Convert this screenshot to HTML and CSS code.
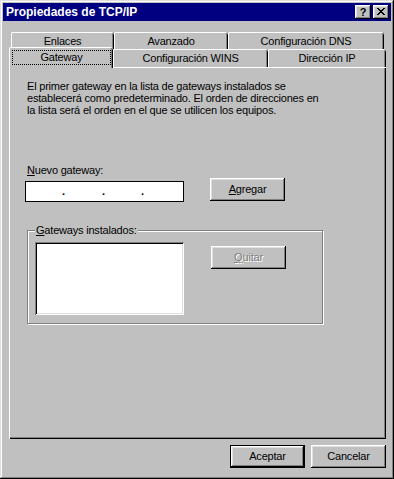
FILE: index.html
```html
<!DOCTYPE html>
<html lang="es">
<head>
    <meta charset="UTF-8">
    <meta name="viewport" content="width=device-width, initial-scale=1.0">
    <title>Propiedades de TCP/IP</title>
    <link rel="stylesheet" href="styles.css">
</head>
<body>
    <div class="window">
        <div class="titlebar">
            <span class="title">Propiedades de TCP/IP</span>
            <button class="cap-btn help">?</button>
            <button class="cap-btn close">
                <svg width="8" height="7" viewBox="0 0 8 7" shape-rendering="crispEdges">
                    <path d="M0 0h2v1h-2z M6 0h2v1h-2z M1 1h2v1h-2z M5 1h2v1h-2z M2 2h4v1h-4z M3 3h2v1h-2z M2 4h4v1h-4z M1 5h2v1h-2z M5 5h2v1h-2z M0 6h2v1h-2z M6 6h2v1h-2z" fill="#000"/>
                </svg>
            </button>
        </div>

        <div class="dialog-body">
            <div class="tab-row back">
                <div class="tab tab-enlaces">Enlaces</div>
                <div class="tab tab-avanzado">Avanzado</div>
                <div class="tab tab-dns">Configuración DNS</div>
            </div>
            <div class="tab-row front">
                <div class="tab tab-gateway active"><span class="focus">Gateway</span></div>
                <div class="tab tab-wins">Configuración WINS</div>
                <div class="tab tab-ip">Dirección IP</div>
            </div>

            <div class="panel">
                <p class="intro">
                    El primer gateway en la lista de gateways instalados se<br>
                    establecerá como predeterminado. El orden de direcciones en<br>
                    la lista será el orden en el que se utilicen los equipos.
                </p>

                <div class="field-label"><u>N</u>uevo gateway:</div>
                <div class="add-row">
                    <div class="ip-input">
                        <span class="ip-part"></span><span class="ip-dot">.</span>
                        <span class="ip-part p2"></span><span class="ip-dot">.</span>
                        <span class="ip-part"></span><span class="ip-dot">.</span>
                    </div>
                    <button class="btn btn-add"><u>A</u>gregar</button>
                </div>

                <fieldset class="group">
                    <legend><u>G</u>ateways instalados:</legend>
                    <div class="group-inner">
                        <div class="listbox"></div>
                        <button class="btn btn-remove" disabled><u>Q</u>uitar</button>
                    </div>
                </fieldset>
            </div>

            <div class="actions">
                <button class="btn default">Aceptar</button>
                <button class="btn">Cancelar</button>
            </div>
        </div>
    </div>
</body>
</html>
```

FILE: styles.css
```css
body {
    margin: 0;
    background: #c0c0c0;
    font-family: "Liberation Sans", Arial, sans-serif;
    font-size: 11px;
    letter-spacing: -0.2px;
    color: #000;
}
.window {
    width: 394px;
    height: 479px;
    box-sizing: border-box;
    padding: 3px;
    background: #c0c0c0;
    box-shadow: inset -1px -1px #000, inset 1px 1px #dfdfdf, inset -2px -2px #808080, inset 2px 2px #fff;
    display: flex;
    flex-direction: column;
}
.titlebar {
    height: 18px;
    background: #000080;
    display: flex;
    align-items: center;
    padding: 0 2px 0 3px;
}
.title {
    color: #fff;
    font-weight: bold;
    font-size: 12px;
    line-height: 18px;
    letter-spacing: 0;
    flex: 1;
}
.cap-btn {
    width: 16px;
    height: 14px;
    padding: 0;
    border: 0;
    background: #c0c0c0;
    box-shadow: inset -1px -1px #000, inset 1px 1px #fff, inset -2px -2px #808080, inset 2px 2px #dfdfdf;
    display: flex;
    align-items: center;
    justify-content: center;
    font-family: "Liberation Sans", Arial, sans-serif;
    font-weight: bold;
    font-size: 11px;
    line-height: 14px;
}
.close {
    margin-left: 2px;
    padding: 0 1px 1px 0;
}
.help {
    padding-bottom: 1px;
}
.dialog-body {
    padding: 11px 5px 0 6px;
    display: flex;
    flex-direction: column;
}

/* tabs */
.tab-row {
    display: flex;
}
.tab-row.back {
    height: 17px;
    padding-left: 2px;
}
.tab-row.front {
    height: 18px;
    align-items: flex-end;
}
.tab {
    box-sizing: border-box;
    background: #c0c0c0;
    border-radius: 2px 2px 0 0;
    box-shadow: inset 1px 0 #fff, inset 0 1px #fff, inset -1px 0 #000, inset -2px 0 #808080;
    text-align: center;
}
.back .tab {
    height: 17px;
    padding-top: 1px;
    line-height: 16px;
}
.front .tab {
    height: 18px;
    padding-top: 1px;
    line-height: 17px;
}
.tab-enlaces { width: 103px; }
.tab-avanzado { width: 114px; }
.tab-dns { width: 156px; }
.tab-gateway { width: 104px; }
.tab-wins { width: 155px; }
.tab-ip { width: 118px; }
.front .tab.active {
    height: 21px;
    margin-bottom: -1px;
    padding: 3px 2px 0 3px;
    position: relative;
    z-index: 1;
}
.focus {
    display: block;
    height: 15px;
    box-sizing: border-box;
    border: 1px dotted #000;
    line-height: 13px;
}

/* page */
.panel {
    height: 372px;
    box-sizing: border-box;
    padding: 13px 0 0 16px;
    box-shadow: inset 1px 1px #fff, inset -1px -1px #000, inset -2px -2px #808080;
    display: flex;
    flex-direction: column;
    align-items: flex-start;
}
.intro {
    margin: 0 0 0 2px;
    line-height: 12px;
}
.field-label {
    margin: 48px 0 0 2px;
    line-height: 12px;
}
.add-row {
    margin-top: 2px;
    display: flex;
    align-items: flex-start;
}
.ip-input {
    width: 159px;
    height: 21px;
    margin-top: 3px;
    box-sizing: border-box;
    border: 1px solid #000;
    background: #fff;
    display: flex;
    line-height: 19px;
}
.ip-part {
    width: 36px;
}
.ip-part.p2 {
    width: 37px;
}
.ip-dot {
    width: 3px;
    font-weight: bold;
}

.btn {
    width: 75px;
    height: 23px;
    padding: 0;
    border: 0;
    background: #c0c0c0;
    box-shadow: inset -1px -1px #000, inset 1px 1px #fff, inset -2px -2px #808080, inset 2px 2px #dfdfdf;
    font-family: inherit;
    font-size: 11px;
    letter-spacing: -0.2px;
    line-height: 23px;
    color: #000;
}
.btn-add {
    margin-left: 26px;
}
.btn:disabled {
    color: #808080;
    text-shadow: 1px 1px #fff;
}
.btn.default {
    border: 1px solid #000;
    line-height: 21px;
}

.group {
    width: 296px;
    box-sizing: border-box;
    margin: 22px 0 0 2px;
    padding: 5px 0 8px 7px;
    border: 1px solid #808080;
    box-shadow: inset 1px 1px #fff, 1px 1px #fff;
}
.group legend {
    padding: 0 1px;
    line-height: 13px;
    background: #c0c0c0;
}
.group-inner {
    display: flex;
    align-items: flex-start;
}
.listbox {
    width: 149px;
    height: 73px;
    background: #fff;
    box-shadow: inset 1px 1px #808080, inset -1px -1px #fff, inset 2px 2px #000, inset -2px -2px #dfdfdf;
}
.btn-remove {
    margin: 4px 0 0 27px;
}

.actions {
    margin-top: 6px;
    display: flex;
    justify-content: flex-end;
    gap: 6px;
}
```
